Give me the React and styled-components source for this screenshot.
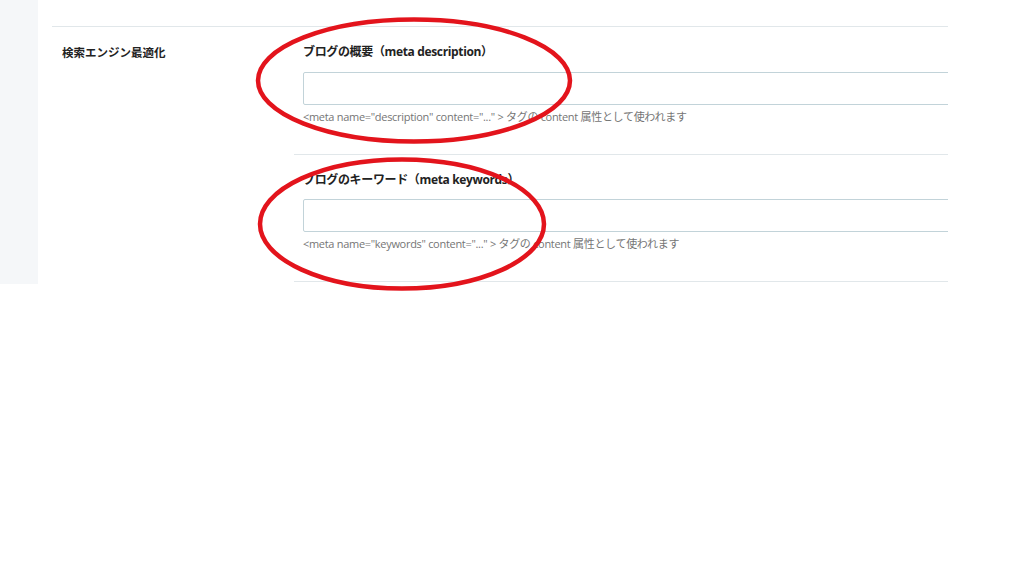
import React from "react";
import styled, { createGlobalStyle } from "styled-components";

const Global = createGlobalStyle`
  html, body { margin: 0; padding: 0; background: #fff; }
  body {
    font-family: "Open Sans", "Noto Sans CJK JP", sans-serif;
    color: #222;
  }
`;

const Page = styled.div`
  position: relative;
  display: flex;
  width: 1024px;
  height: 576px;
  overflow: hidden;
`;

const Frame = styled.div`
  display: flex;
  align-items: stretch;
  height: 284px;
`;

const Sidebar = styled.aside`
  width: 38px;
  flex: none;
  background: #f5f7f9;
`;

const Main = styled.main`
  width: 896px;
  padding: 26px 0 0 14px;
  overflow: hidden;
`;

const Section = styled.section`
  display: grid;
  grid-template-columns: 242px 654px;
  border-top: 1px solid #e1e7ea;
`;

const SectionLabel = styled.h3`
  margin: 0;
  padding: 16px 0 0 10px;
  font-size: 11.5px;
  line-height: 18px;
  font-weight: 700;
  font-family: "Noto Sans CJK JP", sans-serif;
  color: #222;
`;

const Fields = styled.div`
  display: flex;
  flex-direction: column;
`;

const Field = styled.div`
  padding: 16px 0 29px 9px;
  border-bottom: 1px solid #e1e7ea;
`;

const FieldLabel = styled.label`
  display: block;
  font-size: 12px;
  line-height: 18px;
  font-weight: 700;
  color: #222;
  font-family: "Open Sans", "Noto Sans CJK JP", sans-serif;
  letter-spacing: -0.35px;
`;

const Input = styled.input`
  display: block;
  box-sizing: border-box;
  margin-top: ${(p) => (p.$tight ? 10 : 11)}px;
  width: 700px;
  height: 33px;
  border: 1px solid #c2d3d9;
  border-radius: 2px;
  background: #fff;
  padding: 0 8px;
  font: inherit;
  outline: none;
`;

const Help = styled.p`
  margin: 4px 0 0;
  font-size: 11px;
  line-height: 16px;
  color: #757575;
  letter-spacing: -0.3px;
`;

const Overlay = styled.svg`
  position: absolute;
  left: 0;
  top: 0;
  pointer-events: none;
`;

const fields = [
  {
    label: "ブログの概要（meta description）",
    help: '<meta name="description" content="..." > タグの content 属性として使われます',
  },
  {
    label: "ブログのキーワード（meta keywords）",
    help: '<meta name="keywords" content="..." > タグの content 属性として使われます',
  },
];

export default function App() {
  return (
    <>
      <Global />
      <Page>
        <Frame>
          <Sidebar />
          <Main>
            <Section>
              <SectionLabel>検索エンジン最適化</SectionLabel>
              <Fields>
                {fields.map((f, i) => (
                  <Field key={f.label}>
                    <FieldLabel>{f.label}</FieldLabel>
                    <Input type="text" $tight={i > 0} />
                    <Help>{f.help}</Help>
                  </Field>
                ))}
              </Fields>
            </Section>
          </Main>
        </Frame>
        <Overlay width="1024" height="576" viewBox="0 0 1024 576">
          <ellipse cx="414" cy="80.5" rx="156" ry="61" fill="none" stroke="#e3141c" strokeWidth="4.5" />
          <ellipse cx="402" cy="224" rx="142" ry="64.5" fill="none" stroke="#e3141c" strokeWidth="4.5" />
        </Overlay>
      </Page>
    </>
  );
}
